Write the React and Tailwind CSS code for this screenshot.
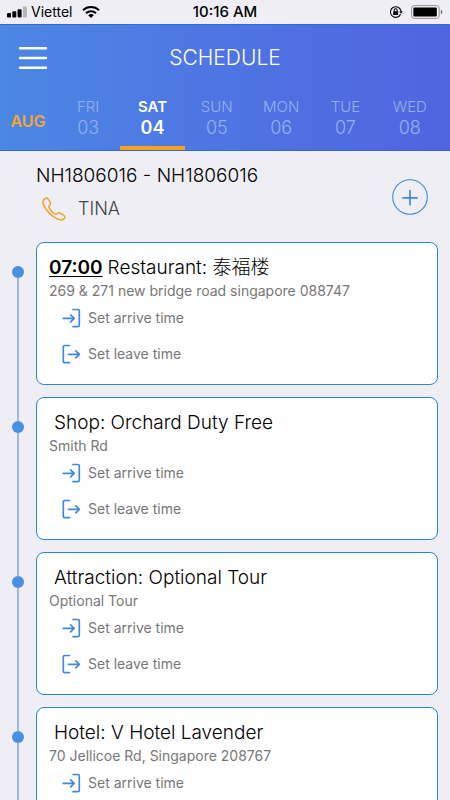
import React, { useState } from "react";

const days = [
    { name: "FRI", date: "03" },
    { name: "SAT", date: "04" },
    { name: "SUN", date: "05" },
    { name: "MON", date: "06" },
    { name: "TUE", date: "07" },
    { name: "WED", date: "08" },
];

const stops = [
    { id: 1, time: "07:00", title: "Restaurant: 泰福楼", address: "269 & 271 new bridge road singapore 088747" },
    { id: 2, title: "Shop: Orchard Duty Free", address: "Smith Rd" },
    { id: 3, title: "Attraction: Optional Tour", address: "Optional Tour" },
    { id: 4, title: "Hotel: V Hotel Lavender", address: "70 Jellicoe Rd, Singapore 208767" },
];

const ArriveIcon = () => (
    <svg className="h-5 w-5" viewBox="0 0 20 20" fill="none" stroke="#3f8ae0" strokeWidth="1.7" strokeLinecap="round" strokeLinejoin="round">
        <path d="M11 1.5H16a1.3 1.3 0 0 1 1.3 1.3v14.6a1.3 1.3 0 0 1-1.3 1.3h-5" />
        <path d="M1.2 10.3h11M8.6 6.8l3.6 3.5-3.6 3.5" />
    </svg>
);

const LeaveIcon = () => (
    <svg className="h-5 w-5" viewBox="0 0 20 20" fill="none" stroke="#3f8ae0" strokeWidth="1.7" strokeLinecap="round" strokeLinejoin="round">
        <path d="M7.5 1.5H2.6a1.3 1.3 0 0 0-1.3 1.3v14.6a1.3 1.3 0 0 0 1.3 1.3h4.9" />
        <path d="M6.5 10.3h10.9M13.8 6.8l3.6 3.5-3.6 3.5" />
    </svg>
);

const StatusBar = () => (
    <div className="grid h-6 grid-cols-3 items-center px-[7px] text-sm text-black">
        <div className="flex items-center gap-1">
            <svg className="h-3 w-5" viewBox="0 0 20 12">
                <rect x="0" y="7" width="4" height="4.5" rx="1" />
                <rect x="5.3" y="5.3" width="4" height="6.2" rx="1" />
                <rect x="10.6" y="3.2" width="4" height="8.3" rx="1" />
                <rect x="15.9" y="0.5" width="4" height="11" rx="1" fill="#b5b5b9" />
            </svg>
            <span>Viettel</span>
            <svg className="ml-1.5 h-3 w-[18px]" viewBox="0 0 18 12" fill="none" stroke="#000" strokeWidth="2">
                <path d="M1 4.3a11.6 11.6 0 0 1 16 0" />
                <path d="M4 7.3a7.2 7.2 0 0 1 10 0" />
                <path d="M9 12 6.2 9.3a4 4 0 0 1 5.6 0z" fill="#000" stroke="none" />
            </svg>
        </div>
        <span className="text-center text-[15px] font-medium">10:16 AM</span>
        <div className="flex items-center justify-end gap-2">
            <svg className="h-[14px] w-[14px]" viewBox="0 0 14 14" fill="none" stroke="#000" strokeWidth="1.1">
                <path d="M11.6 9.2A5.3 5.3 0 1 1 12 6.2" />
                <path d="M10.2 6.3h3.5L12 8.7z" fill="#000" stroke="none" />
                <rect x="4.2" y="6.2" width="5" height="3.8" rx="0.5" fill="#000" stroke="none" />
                <path d="M5.2 6.4V5.2a1.5 1.5 0 0 1 3 0v1.2" />
            </svg>
            <svg className="h-[14px] w-8" viewBox="0 0 32 14">
                <rect x="0.6" y="0.6" width="27.6" height="12.8" rx="2.6" fill="none" stroke="#8f8f93" />
                <rect x="2.4" y="2.5" width="23.4" height="9" rx="1" />
                <path d="M29.8 4.8a2.3 2.3 0 0 1 0 4.4z" fill="#77777b" />
            </svg>
        </div>
    </div>
);

const StopCard = ({ stop, first }) => (
    <li className="flex">
        <div className="flex w-9 shrink-0 flex-col items-center">
            <div className={`h-6 w-0.5 ${first ? "bg-transparent" : "bg-[#9fb6e6]"}`} />
            <div className="h-3 w-3 rounded-full bg-[#4a90e2]" />
            <div className="w-0.5 flex-1 bg-[#9fb6e6]" />
        </div>
        <div className="mb-3 min-w-0 flex-1 rounded-lg border border-[#2585de] bg-white p-3">
            <h2 className="text-[19px] leading-[26px] font-light text-black">
                {stop.time && <span className="font-semibold underline decoration-1 underline-offset-2">{stop.time}</span>}
                <span className="ml-[5px]">{stop.title}</span>
            </h2>
            <p className="text-sm leading-[19px] text-[#777]">{stop.address}</p>
            <button type="button" className="flex h-9 items-center gap-1.5 pl-[13px] text-sm text-[#777]">
                <ArriveIcon />
                Set arrive time
            </button>
            <button type="button" className="flex h-9 items-center gap-1.5 pl-[13px] text-sm text-[#777]">
                <LeaveIcon />
                Set leave time
            </button>
        </div>
    </li>
);

const App = () => {
    const [selected, setSelected] = useState("04");

    return (
        <div className="h-screen overflow-hidden bg-[#efeef4] font-['Inter','Noto_Sans_CJK_SC',sans-serif]">
            <StatusBar />

            <header className="border-y border-[#2f68e0] bg-linear-to-r from-[#4b87e4] via-[#4f74e3] to-[#5064e0]">
                <div className="grid h-[66px] grid-cols-[56px_1fr_56px] items-center">
                    <button type="button" aria-label="Menu" className="flex justify-end pr-2">
                        <svg className="h-6 w-[30px]" viewBox="0 0 30 24" stroke="#fff" strokeWidth="2.4" strokeLinecap="round">
                            <path d="M2 2.2h26M2 12h26M2 21.8h26" />
                        </svg>
                    </button>
                    <h1 className="text-center text-[21px] font-light text-white">SCHEDULE</h1>
                </div>
                <div className="flex h-[59px] pr-2">
                    <span className="w-14 pt-[18px] text-center text-base leading-6 font-semibold text-[#f5a632]">AUG</span>
                    {days.map((day) => (
                        <button
                            key={day.date}
                            type="button"
                            onClick={() => setSelected(day.date)}
                            className={`flex flex-1 flex-col items-center border-b-4 pt-1.5 ${
                                selected === day.date
                                    ? "border-[#f9a11b] font-semibold text-white"
                                    : "border-transparent font-light text-[#93b3f0]"
                            }`}
                        >
                            <span className="text-[15px] leading-5">{day.name}</span>
                            <span className="text-lg leading-[22px]">{day.date}</span>
                        </button>
                    ))}
                </div>
            </header>

            <section className="flex items-center justify-between pt-3 pr-[22px] pb-[19px] pl-9">
                <div>
                    <p className="text-[19px] leading-[26px] font-light text-black">NH1806016 - NH1806016</p>
                    <a href="tel:" className="mt-1.5 flex items-center gap-3 pl-1.5 text-lg leading-7 font-light text-[#444]">
                        <svg className="h-6 w-6" viewBox="0 0 24 24" fill="none" stroke="#f5a02a" strokeWidth="1.5" strokeLinejoin="round">
                            <path d="M1.5 3C2.8 1.200 4.800.4 6 1.900L8.200 5.200C9.200 6.900 8.400 7.800 7.300 8.800 6.500 9.600 6.700 10.400 7.300 11.300 8.800 13.500 10.500 15.300 12.500 16.800 13.400 17.400 14.200 17.400 15 16.700 16.200 15.600 17.200 15.400 18.600 16.300L22 18.600C23.600 19.800 23 21.200 21.600 22.200 19.800 23.500 17.500 22.900 15.300 21.900 9.600 19.200 4.700 14.300 1.900 8.700 1 6.900.4 4.700 1.500 3z" />
                        </svg>
                        TINA
                    </a>
                </div>
                <button type="button" aria-label="Add" className="mt-2">
                    <svg className="h-9 w-9" viewBox="0 0 36 36" fill="none" stroke="#3f8ae0">
                        <circle cx="18" cy="18" r="17.3" strokeWidth="1.1" />
                        <path d="M18 11v15.5M10.3 18.8h15.5" strokeWidth="1.7" />
                    </svg>
                </button>
            </section>

            <ol className="pr-3">
                {stops.map((stop, index) => (
                    <StopCard key={stop.id} stop={stop} first={index === 0} />
                ))}
            </ol>
        </div>
    );
};

export default App;
